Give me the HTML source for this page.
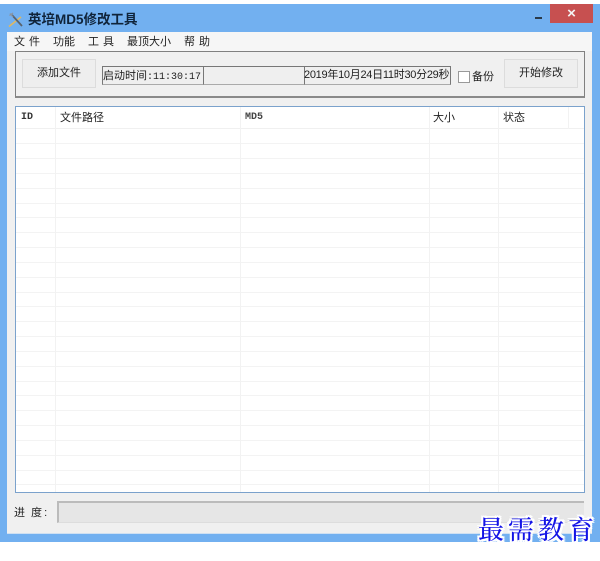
<!DOCTYPE html>
<html><head><meta charset="utf-8"><style>
html,body{margin:0;padding:0;background:#fff}
body{width:600px;height:561px;position:relative;overflow:hidden;font-family:"Liberation Sans","WenQuanYi Zen Hei","Noto Sans CJK SC",sans-serif;font-size:11px;color:#222}
div{position:absolute;box-sizing:border-box;white-space:nowrap}
.t{line-height:14px;height:14px}
.w{word-spacing:1px}
.btn{background:#eeeeee;border:1px solid #dcdcdc;text-align:center;line-height:27px;width:74px;height:29px;top:59px}
.hl{height:1px;left:16px;width:568px;background:#f3f3f3}
.vl{width:1px;top:107px;height:385px;background:#f2f2f2}
.mono{font-family:"Liberation Mono","WenQuanYi Zen Hei",monospace}
</style></head><body>
<div style="left:0;top:4px;width:600px;height:538px;background:#72b0f0"></div>
<div style="left:7px;top:32px;width:585px;height:502px;background:#f0f0f0;border-bottom:1px solid #cfe0f2"></div>

<svg style="position:absolute;left:8px;top:12px" width="16" height="16" viewBox="0 0 16 16"><path d="M1 14.5L13 5" stroke="#e0b860" stroke-width="1.6" fill="none"/><path d="M4 3L14 14" stroke="#59636e" stroke-width="1.8" fill="none"/><path d="M1.5 3.5L5 1M2 1.5L5 5" stroke="#8a94a0" stroke-width="1.2" fill="none"/></svg>
<div class="t" style="left:28px;top:13px;font-size:13.5px;font-weight:bold;color:#10243a">英培MD5修改工具</div>
<div style="left:535px;top:17px;width:7px;height:2px;background:#2a3a4a"></div>
<div style="left:550px;top:4px;width:43px;height:19px;background:#c75050;color:#f4f4f4;text-align:center;line-height:19px;font-size:15px;font-weight:bold">×</div>

<div style="left:7px;top:32px;width:585px;height:19px;background:#f6f6f6"></div>
<div class="t w" style="left:14px;top:35px">文 件</div>
<div class="t" style="left:53px;top:35px">功能</div>
<div class="t w" style="left:88px;top:35px">工 具</div>
<div class="t" style="left:127px;top:35px">最顶大小</div>
<div class="t w" style="left:184px;top:35px">帮 助</div>

<div style="left:15px;top:51px;width:570px;height:47px;border:1px solid #808080;border-bottom:2px solid #8a8a8a;background:#f0f0f0"></div>
<div class="btn" style="left:22px">添加文件</div>
<div style="left:102px;top:66px;width:102px;height:19px;border:1px solid #777;border-bottom-color:#aaa;background:#efefef"></div>
<div style="left:203px;top:66px;width:102px;height:19px;border:1px solid #777;border-bottom-color:#aaa;background:#efefef"></div>
<div style="left:304px;top:66px;width:147px;height:19px;border:1px solid #777;border-bottom-color:#aaa;background:#efefef"></div>
<div class="t" style="left:103px;top:69px">启动时间<span class="mono" style="font-size:10px">:11:30:17</span></div>
<div class="t" style="left:304px;top:68px;font-size:11px;letter-spacing:-.28px">2019年10月24日11时30分29秒</div>
<div style="left:458px;top:71px;width:12px;height:12px;background:#fff;border:1px solid #999"></div>
<div class="t" style="left:472px;top:70px">备份</div>
<div class="btn" style="left:504px">开始修改</div>

<div style="left:15px;top:106px;width:570px;height:387px;background:#fff;border:1px solid #7ba2cc"></div>
<div class="hl" style="top:128px;background:#f0f0f0"></div>
<div class="hl" style="top:143px"></div><div class="hl" style="top:158px"></div><div class="hl" style="top:173px"></div><div class="hl" style="top:188px"></div><div class="hl" style="top:203px"></div><div class="hl" style="top:217px"></div><div class="hl" style="top:232px"></div><div class="hl" style="top:247px"></div><div class="hl" style="top:262px"></div><div class="hl" style="top:277px"></div><div class="hl" style="top:292px"></div><div class="hl" style="top:306px"></div><div class="hl" style="top:321px"></div><div class="hl" style="top:336px"></div><div class="hl" style="top:351px"></div><div class="hl" style="top:366px"></div><div class="hl" style="top:381px"></div><div class="hl" style="top:395px"></div><div class="hl" style="top:410px"></div><div class="hl" style="top:425px"></div><div class="hl" style="top:440px"></div><div class="hl" style="top:455px"></div><div class="hl" style="top:470px"></div><div class="hl" style="top:484px"></div>
<div class="vl" style="left:55px"></div><div class="vl" style="left:240px"></div><div class="vl" style="left:429px"></div><div class="vl" style="left:498px"></div><div class="vl" style="left:568px;height:22px"></div>
<div class="t mono" style="left:21px;top:111px;font-size:10px;font-weight:bold;color:#333">ID</div>
<div class="t" style="left:60px;top:111px">文件路径</div>
<div class="t mono" style="left:245px;top:111px;font-size:10px;font-weight:bold;color:#444">MD5</div>
<div class="t" style="left:433px;top:111px">大小</div>
<div class="t" style="left:503px;top:111px">状态</div>

<div class="t" style="left:14px;top:506px;word-spacing:3px">进 度<span style="margin-left:2px;word-spacing:0">:</span></div>
<div style="left:57px;top:501px;width:527px;height:22px;background:#e6e6e6;border-top:2px solid #bbb;border-left:2px solid #bbb;border-bottom:1px solid #ddd"></div>

<div style="left:478px;top:512px;font-family:'Noto Serif CJK SC',serif;font-size:26px;line-height:34px;letter-spacing:4px;color:#1414e6;font-weight:500;text-shadow:2px 0 0 #fff,-2px 0 0 #fff,0 2px 0 #fff,0 -2px 0 #fff,2px 2px 0 #fff,-2px -2px 0 #fff,2px -2px 0 #fff,-2px 2px 0 #fff">最需教育</div>
</body></html>
